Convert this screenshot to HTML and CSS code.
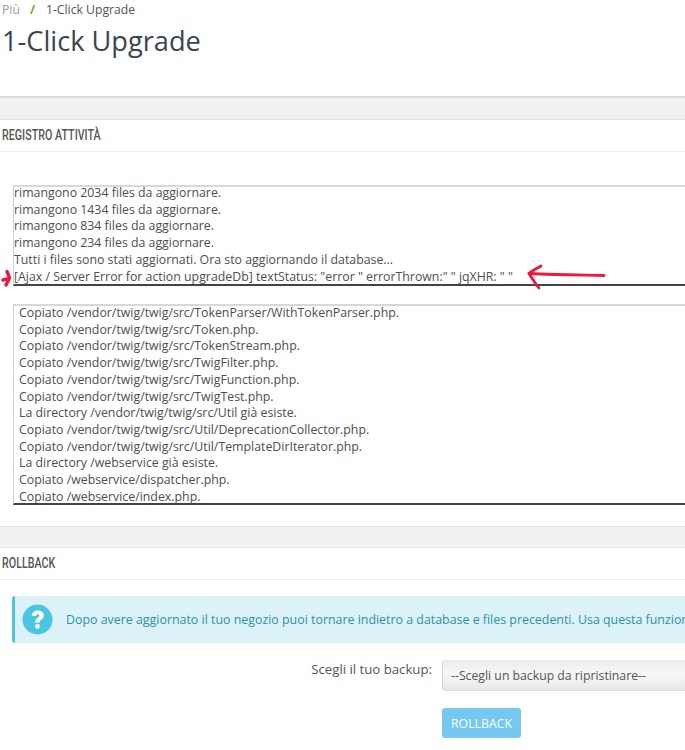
FILE: index.html
```html
<!DOCTYPE html>
<html lang="it">
<head>
<meta charset="utf-8">
<title>1-Click Upgrade</title>
<link rel="stylesheet" href="styles.css">
</head>
<body>
<div class="page">
  <header class="head">
    <nav class="crumbs"><span class="crumb-muted">Più</span><span class="crumb-sep">/</span><span>1-Click Upgrade</span></nav>
    <h1 class="title">1-Click Upgrade</h1>
  </header>

  <div class="band band-first"></div>
  <section class="panel">
    <h2 class="panel-title"><span class="panel-title-text">REGISTRO ATTIVITÀ</span></h2>
    <div class="panel-body log-body">
      <div class="log log-status">
        <div>rimangono 2034 files da aggiornare.</div>
        <div>rimangono 1434 files da aggiornare.</div>
        <div>rimangono 834 files da aggiornare.</div>
        <div>rimangono 234 files da aggiornare.</div>
        <div>Tutti i files sono stati aggiornati. Ora sto aggiornando il database...</div>
        <div>[Ajax / Server Error for action upgradeDb] textStatus: "error " errorThrown:" " jqXHR: " "</div>
      </div>
      <div class="log log-files">
        <div>Copiato /vendor/twig/twig/src/TokenParser/WithTokenParser.php.</div>
        <div>Copiato /vendor/twig/twig/src/Token.php.</div>
        <div>Copiato /vendor/twig/twig/src/TokenStream.php.</div>
        <div>Copiato /vendor/twig/twig/src/TwigFilter.php.</div>
        <div>Copiato /vendor/twig/twig/src/TwigFunction.php.</div>
        <div>Copiato /vendor/twig/twig/src/TwigTest.php.</div>
        <div>La directory /vendor/twig/twig/src/Util già esiste.</div>
        <div>Copiato /vendor/twig/twig/src/Util/DeprecationCollector.php.</div>
        <div>Copiato /vendor/twig/twig/src/Util/TemplateDirIterator.php.</div>
        <div>La directory /webservice già esiste.</div>
        <div>Copiato /webservice/dispatcher.php.</div>
        <div>Copiato /webservice/index.php.</div>
      </div>
    </div>
  </section>

  <div class="band"></div>
  <section class="panel">
    <h2 class="panel-title"><span class="panel-title-text">ROLLBACK</span></h2>
    <div class="panel-body rollback-body">
      <div class="alert">
        <svg class="alert-icon" viewBox="0 0 32 32" width="31" height="31" aria-hidden="true">
          <circle cx="16" cy="16" r="15.5" fill="#4cc4e3"/>
          <path d="M10 12.400c.3-3.600 3-5.600 6.400-5.600 3.500 0 6.100 2.100 6.100 5.100 0 2.200-1.200 3.300-2.700 4.400-1.100.8-1.700 1.300-1.700 2.600v.5h-4.300v-.9c0-2.200.9-3.300 2.400-4.400 1-.7 1.700-1.200 1.700-2.100 0-.9-.6-1.500-1.500-1.500-1 0-1.600.7-1.800 1.900z" fill="#fff"/>
          <rect x="13.800" y="21" width="4.300" height="4.300" rx=".5" fill="#fff"/>
        </svg>
        <span class="alert-text">Dopo avere aggiornato il tuo negozio puoi tornare indietro a database e files precedenti. Usa questa funzione</span>
      </div>
      <div class="form-row">
        <label class="form-label">Scegli il tuo backup:</label>
        <div class="select">--Scegli un backup da ripristinare--</div>
      </div>
      <div class="form-actions"><span class="btn">ROLLBACK</span></div>
    </div>
  </section>

  <svg class="marks" width="685" height="750" viewBox="0 0 685 750" aria-hidden="true">
    <path class="mark" d="M604 275.500C585 275 560 275 529 273.500"/>
    <path class="mark" d="M541 266C536 269 532 271 529 273.500C532 278 535 283 539 288"/>
    <path class="mark mark-thick" d="M7 271.500C8 274 9 276 9.500 278C7 279 5 279.500 3 280M9.500 278C8 281 7 283 6 285"/>
  </svg>
</div>
</body>
</html>
```

FILE: styles.css
```css
html, body {
  margin: 0;
  padding: 0;
  background: #fff;
}

.page {
  position: relative;
  width: 685px;
  height: 750px;
  overflow: hidden;
  font-family: "Open Sans", sans-serif;
  color: #4b4f54;
}

.head {
  height: 96px;
  box-sizing: border-box;
  padding: 1px 0 0 2px;
}

.crumbs {
  display: flex;
  gap: 10px;
  font-size: 12.2px;
  line-height: 18px;
  color: #555;
}

.crumb-muted { color: #9a9a9a; }
.crumb-sep { color: #6fa83c; margin-right: 1px; font-weight: 700; }

.title {
  margin: 3px 0 0;
  font-size: 27.2px;
  line-height: 38px;
  font-weight: 400;
  color: #3a4550;
}

.band {
  height: 20px;
  background: #eff1f3;
  border-top: 1px solid #e2e4e6;
  border-bottom: 1px solid #e2e4e6;
}

.band-first {
  height: 21px;
  border-top: 2px solid #d9dbdd;
}

.panel-title {
  margin: 0;
  height: 32px;
  padding-left: 2px;
  font-family: "Roboto", "Liberation Sans", sans-serif;
  font-size: 14.500px;
  font-weight: 500;
  line-height: 31px;
  color: #555;
  border-bottom: 1px solid #eeeff0;
  box-sizing: border-box;
}

.panel-title-text {
  display: inline-block;
  transform: scaleX(0.74);
  transform-origin: left center;
}

.panel-body {
  padding-left: 13px;
}

.log-body {
  padding-top: 33px;
  height: 374px;
  box-sizing: border-box;
}

.log {
  width: 720px;
  box-sizing: border-box;
  font-size: 12.33px;
  line-height: 16.7px;
  color: #4e4e4e;
  border-top: 2px solid #d8d8d8;
  border-left: 1px solid #cfcfcf;
  border-bottom: 2px solid #444;
  white-space: nowrap;
  overflow: hidden;
}

.log-status {
  height: 101px;
}

.log-status div:first-child {
  margin-top: -2px;
}

.log-files {
  height: 201px;
  margin-top: 18px;
  padding-left: 5px;
}

.log-files div:first-child {
  margin-top: -1px;
}

.rollback-body {
  padding-top: 16px;
  padding-left: 12px;
}

.alert {
  display: flex;
  align-items: center;
  gap: 13px;
  width: 673px;
  height: 47px;
  box-sizing: border-box;
  padding-left: 7px;
  background: #dcf2f9;
  border-left: 3px solid #4cc4e3;
  border-radius: 3px 0 0 3px;
  white-space: nowrap;
  overflow: hidden;
}

.alert-icon { flex: none; }

.alert-text {
  font-size: 12.4px;
  color: #2a93a8;
}

.form-row {
  display: flex;
  align-items: flex-start;
  margin-top: 17px;
}

.form-label {
  flex: none;
  width: 420px;
  text-align: right;
  font-size: 13.2px;
  line-height: 18px;
  color: #555;
}

.select {
  flex: none;
  width: 243px;
  height: 31px;
  margin-left: 10px;
  padding-left: 8px;
  box-sizing: border-box;
  font-size: 12.25px;
  line-height: 32px;
  color: #555;
  background: linear-gradient(#ececec, #f7f7f7 45%, #e6e8e8);
  border-radius: 4px 0 0 4px;
  border-left: 1px solid #d4d6d6;
  border-bottom: 1px solid #d9dddd;
  white-space: nowrap;
}

.form-actions {
  margin-top: 17px;
  padding-left: 430px;
}

.btn {
  display: block;
  width: 79px;
  height: 30px;
  font-size: 12.3px;
  line-height: 31px;
  text-align: center;
  color: #fff;
  background: #74c8f2;
  border-radius: 3px;
}

.marks {
  position: absolute;
  left: 0;
  top: 0;
  pointer-events: none;
}

.mark {
  fill: none;
  stroke: #f0163f;
  stroke-width: 2.8;
  stroke-linecap: round;
  stroke-linejoin: round;
}

.mark-thick { stroke-width: 3.4; }
```
